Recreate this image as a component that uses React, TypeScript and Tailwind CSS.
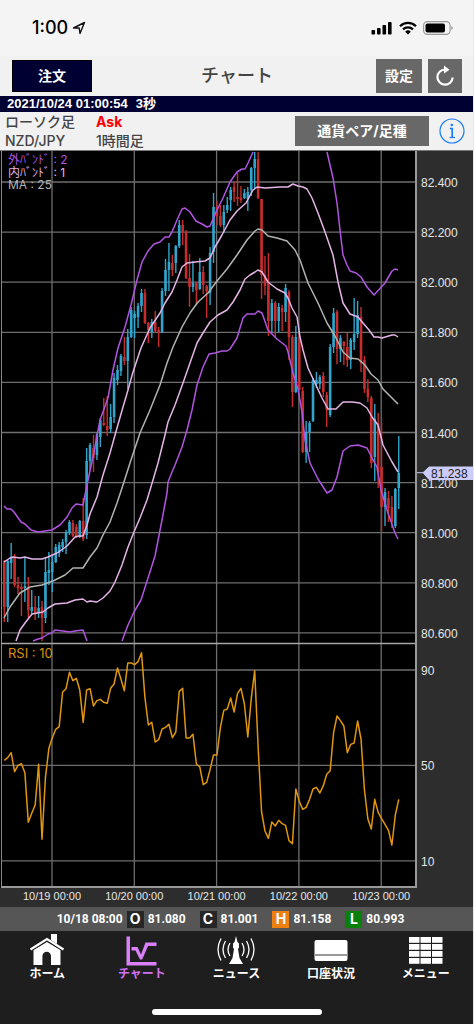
import { clsx } from "clsx"

type Point = [number, number]
// high, low, body top, body bottom (chart units), rising
type Candle = [number, number, number, number, 0 | 1]

const FIRST_X = 4.3
const STEP_X = 3.43
const xAt = (i: number) => FIRST_X + i * STEP_X

const candles: Candle[] = [
  [410, 472, 411, 457, 0], [410, 472, 411, 457, 1], [393, 429, 407, 413, 1], [404, 437, 407, 435, 0],
  [427, 444, 435, 438, 0], [434, 466, 437, 439, 0], [407, 452, 436, 438, 1], [427, 468, 437, 460, 0],
  [440, 465, 457, 461, 1], [446, 470, 457, 463, 0], [446, 468, 458, 463, 1], [451, 491, 457, 468, 0],
  [408, 473, 422, 468, 1], [402, 435, 420, 423, 1], [406, 442, 412, 422, 1], [394, 413, 397, 412, 1],
  [392, 407, 395, 403, 1], [389, 402, 392, 397, 1], [380, 404, 382, 392, 1], [370, 385, 372, 383, 1],
  [370, 387, 373, 386, 0], [374, 388, 377, 387, 0], [370, 388, 371, 387, 1], [348, 391, 371, 389, 0],
  [298, 389, 311, 385, 1], [293, 320, 295, 311, 1], [285, 322, 298, 308, 0], [283, 310, 285, 305, 1],
  [268, 297, 270, 287, 1], [248, 276, 273, 275, 0], [246, 286, 276, 280, 0], [254, 283, 267, 279, 1],
  [223, 273, 228, 267, 1], [215, 235, 220, 230, 1], [204, 226, 206, 221, 1], [187, 215, 207, 211, 0],
  [179, 239, 187, 211, 1], [157, 188, 160, 187, 1], [161, 188, 164, 168, 1], [153, 178, 156, 167, 1],
  [139, 162, 143, 156, 1], [139, 174, 143, 173, 0], [172, 193, 173, 180, 0], [169, 188, 172, 182, 1],
  [161, 182, 172, 181, 0], [177, 197, 180, 182, 0], [138, 183, 141, 182, 1], [109, 146, 120, 141, 1],
  [93, 141, 112, 120, 1], [105, 126, 113, 120, 0], [95, 123, 96, 113, 1], [70, 98, 75, 96, 1],
  [70, 95, 75, 82, 0], [80, 129, 82, 128, 0], [104, 157, 128, 137, 0], [111, 142, 133, 137, 1],
  [132, 155, 132, 140, 0], [108, 140, 122, 139, 1], [116, 144, 122, 135, 0], [135, 168, 136, 141, 0],
  [97, 155, 103, 143, 1], [43, 113, 57, 102, 1], [51, 75, 57, 66, 0], [55, 77, 66, 75, 0],
  [55, 83, 62, 75, 1], [47, 63, 55, 60, 1], [37, 61, 40, 50, 1], [32, 52, 37, 42, 0],
  [23, 56, 47, 49, 0], [36, 53, 48, 50, 0], [39, 49, 43, 48, 1], [37, 61, 42, 49, 1],
  [17, 46, 18, 40, 1], [2, 38, 9, 18, 1], [2, 49, 9, 48, 0], [49, 149, 49, 125, 0],
  [106, 145, 125, 136, 0], [103, 186, 132, 171, 0], [149, 183, 153, 171, 1], [151, 187, 153, 171, 0],
  [153, 182, 157, 171, 1], [155, 181, 158, 162, 0], [134, 172, 138, 162, 1], [140, 210, 142, 187, 0],
  [185, 257, 187, 242, 0], [176, 243, 187, 242, 1], [182, 240, 189, 240, 0], [237, 303, 241, 302, 0],
  [271, 313, 282, 302, 1], [271, 302, 273, 282, 1], [228, 272, 230, 271, 1], [222, 238, 230, 234, 1],
  [225, 239, 227, 234, 1], [222, 247, 226, 242, 0], [242, 277, 245, 260, 0], [194, 267, 197, 265, 1],
  [158, 203, 163, 197, 1], [160, 214, 162, 199, 0], [185, 212, 188, 199, 1], [191, 215, 192, 196, 0],
  [183, 217, 197, 210, 0], [188, 219, 190, 210, 1], [148, 200, 184, 192, 1], [151, 188, 165, 184, 1],
  [157, 222, 167, 213, 0], [206, 243, 210, 239, 0], [229, 252, 239, 247, 0], [246, 318, 248, 313, 0],
  [254, 331, 269, 307, 1], [263, 338, 273, 322, 0], [273, 381, 317, 357, 0], [338, 376, 342, 357, 1],
  [341, 372, 348, 358, 0], [346, 378, 357, 372, 0], [338, 378, 339, 376, 1], [286, 359, 323, 338, 1],
]

// thirds of a chart unit below the top of the RSI panel
const rsi = [
  361, 353, 338, 395, 376, 371, 398, 547, 520, 495, 373, 598, 412, 325, 293, 268, 260, 156, 146, 97,
  122, 115, 150, 247, 150, 146, 198, 182, 178, 187, 190, 145, 132, 84, 117, 152, 69, 69, 74, 65,
  38, 172, 255, 247, 306, 299, 267, 262, 253, 293, 276, 154, 145, 294, 294, 283, 372, 381, 434, 427,
  388, 345, 345, 262, 211, 207, 174, 216, 160, 145, 192, 291, 175, 92, 320, 515, 573, 595, 546, 558,
  541, 551, 556, 602, 611, 447, 484, 508, 502, 478, 447, 442, 459, 437, 403, 392, 278, 228, 242, 258,
  338, 313, 309, 243, 297, 450, 537, 567, 478, 517, 536, 553, 571, 615, 525, 478,
]

const outerBand: Point[][] = [
  [[4, 356], [7, 359], [11, 359], [14, 362], [21, 372], [25, 374], [31, 380], [38, 382], [45, 381], [52, 380], [60, 375], [67, 367], [72, 358], [76, 354], [83, 355], [87, 335], [94, 302], [100, 270], [108, 248], [113, 220], [118, 198], [125, 177], [131, 155], [137, 130], [142, 112], [148, 101], [154, 94], [160, 92], [165, 87], [169, 87], [172, 82], [177, 70], [182, 59], [185, 58], [190, 62], [196, 71], [202, 74], [207, 77], [210, 76], [217, 60], [223, 48], [230, 32], [237, 22], [242, 19], [245, 19], [248, 13], [253, 2]],
  [[327, 2], [330, 15], [333, 28], [337, 53], [340, 80], [343, 105], [347, 115], [350, 121], [356, 123], [361, 127], [367, 137], [374, 145], [385, 133], [392, 121], [395, 119], [398, 120]],
  [[33, 491], [38, 489], [42, 488], [48, 484], [52, 483], [55, 480], [63, 481], [70, 482], [75, 481], [83, 480], [87, 491]],
  [[122, 491], [128, 475], [134, 462], [141, 450], [148, 428], [155, 406], [162, 370], [167, 343], [168, 332], [172, 322], [175, 315], [182, 297], [187, 280], [192, 260], [197, 235], [203, 217], [209, 204], [215, 203], [222, 201], [227, 201], [230, 199], [237, 188], [243, 168], [247, 164], [255, 164], [258, 161], [262, 163], [268, 180], [277, 189], [286, 196], [288, 202], [293, 223], [298, 239], [302, 262], [305, 290], [310, 313], [318, 329], [327, 343], [332, 340], [337, 327], [343, 301], [350, 296], [358, 295], [367, 298], [372, 308], [377, 317], [381, 340], [388, 363], [395, 383], [398, 389]],
]

const innerBand: Point[][] = [
  [[4, 412], [10, 408], [13, 407], [20, 408], [25, 407], [32, 409], [42, 409], [48, 407], [57, 403], [67, 396], [75, 387], [79, 386], [83, 386], [87, 375], [90, 364], [97, 347], [103, 325], [110, 303], [117, 278], [123, 257], [128, 240], [133, 222], [141, 198], [150, 178], [160, 163], [165, 153], [172, 142], [177, 130], [182, 117], [187, 113], [195, 112], [205, 111], [210, 108], [215, 97], [222, 85], [230, 70], [237, 61], [246, 53], [253, 40], [257, 37], [265, 38], [280, 37], [288, 37], [293, 34], [298, 36], [303, 37], [307, 39], [312, 48], [318, 63], [325, 82], [333, 105], [338, 132], [343, 153], [350, 164], [358, 167], [363, 173], [369, 180], [374, 187], [378, 187], [382, 188], [392, 185], [395, 185], [398, 187]],
  [[16, 491], [20, 480], [25, 473], [32, 464], [43, 462], [48, 458], [55, 454], [67, 453], [75, 450], [83, 449], [87, 452], [90, 451], [97, 452], [103, 448], [110, 441], [115, 432], [122, 415], [128, 397], [134, 382], [140, 368], [147, 350], [153, 330], [158, 313], [165, 285], [168, 272], [175, 255], [183, 233], [190, 213], [197, 193], [203, 183], [210, 172], [218, 165], [227, 160], [233, 152], [240, 140], [245, 129], [250, 125], [255, 122], [258, 120], [262, 122], [268, 132], [277, 139], [285, 143], [288, 148], [292, 158], [297, 167], [300, 187], [303, 200], [308, 218], [315, 233], [322, 248], [328, 259], [336, 259], [343, 252], [352, 252], [360, 253], [367, 258], [372, 267], [378, 275], [383, 295], [392, 312], [398, 322]],
]

const movingAverage: Point[] = [
  [4, 468], [10, 457], [20, 443], [30, 437], [42, 435], [53, 431], [65, 425], [73, 418], [83, 418], [90, 407], [97, 398], [103, 385], [110, 372], [117, 353], [123, 335], [130, 313], [140, 283], [150, 260], [160, 235], [167, 213], [173, 197], [182, 177], [190, 163], [198, 152], [208, 143], [217, 131], [227, 119], [237, 105], [247, 90], [255, 81], [258, 79], [262, 80], [268, 86], [277, 88], [287, 91], [295, 100], [300, 110], [308, 133], [318, 153], [327, 173], [335, 186], [343, 202], [350, 208], [358, 209], [365, 215], [371, 224], [378, 230], [383, 239], [398, 254],
]

const priceTicks = ["82.400", "82.200", "82.000", "81.800", "81.600", "81.400", "81.200", "81.000", "80.800", "80.600"]
const dayTicks = ["10/19 00:00", "10/20 00:00", "10/21 00:00", "10/22 00:00", "10/23 00:00"]
const rsiTicks = [90, 50, 10]

const toPoints = (pts: Point[]) => pts.map((p) => p.join(",")).join(" ")

function Chart() {
  return (
    <svg viewBox="0 0 473 757" className="block h-auto w-full bg-[#2d2d2d]" role="img" aria-label="NZD/JPY 1時間足">
      <rect x="0" y="0" width="417" height="738" fill="#000" />

      {/* Grid */}
      <g stroke="#6e6e6e" strokeWidth="1.3">
        {priceTicks.map((t, i) => (
          <line key={t} x1="1" x2="416" y1={32 + i * 50.1} y2={32 + i * 50.1} />
        ))}
        {rsiTicks.map((t, i) => (
          <line key={t} x1="1" x2="416" y1={520 + i * 95.4} y2={520 + i * 95.4} />
        ))}
        {dayTicks.map((t, i) => (
          <line key={t} x1={52 + i * 82.3} x2={52 + i * 82.3} y1="1" y2="737" />
        ))}
      </g>

      {/* Candles */}
      {candles.map(([high, low, top, bottom, up], i) => (
        <g key={i} fill={up ? "#31a5cb" : "#c82d2d"}>
          <rect x={xAt(i) - 0.7} y={high} width="1.4" height={low - high} />
          <rect x={xAt(i) - 1.3} y={top} width="2.6" height={bottom - top} />
        </g>
      ))}

      {/* Bands and moving average */}
      <g fill="none" strokeWidth="1.5" strokeLinejoin="round">
        <polyline points={toPoints(movingAverage)} stroke="#b0b4b0" />
        {innerBand.map((pts, i) => (
          <polyline key={i} points={toPoints(pts)} stroke="#e4b4e6" />
        ))}
        {outerBand.map((pts, i) => (
          <polyline key={i} points={toPoints(pts)} stroke="#b055e0" />
        ))}
        <polyline points={toPoints(rsi.map((v, i): Point => [xAt(i), 490 + v / 3]))} stroke="#e0960f" />
      </g>

      {/* Frame */}
      <g stroke="#a6a6a6" fill="none">
        <line x1="0" x2="473" y1="0.5" y2="0.5" stroke="#777" />
        <line x1="1.5" x2="1.5" y1="0" y2="737" stroke="#888" />
        <line x1="1" x2="416" y1="493.4" y2="493.4" strokeWidth="1.5" />
        <path d="M1 737H416V1" strokeWidth="2" stroke="#999" />
      </g>

      {/* Indicator legend */}
      <g className="font-[Inter,'Noto_Sans_CJK_JP',sans-serif] text-[12px]">
        <text x="8" y="14" fill="#b055e0">外ﾊﾞﾝﾄﾞ : 2</text>
        <text x="8" y="27" fill="#e4b4e6">内ﾊﾞﾝﾄﾞ : 1</text>
        <text x="8" y="39" fill="#b4b4b4">MA : 25</text>
        <text x="8" y="508" fill="#d8900f" className="text-[13px]">RSI : 10</text>
      </g>

      {/* Axis labels */}
      <g className="font-['Liberation_Sans',sans-serif] text-[12px]" fill="#e6e6e6">
        {priceTicks.map((t, i) => (
          <text key={t} x="421" y={37 + i * 50.1}>{t}</text>
        ))}
        {rsiTicks.map((t, i) => (
          <text key={t} x="421" y={525 + i * 95.4}>{t}</text>
        ))}
        {dayTicks.map((t, i) => (
          <text key={t} x={52 + i * 82.3} y="750" textAnchor="middle" className="text-[11px]">{t}</text>
        ))}
        <path d="M417 322.7H423L429 317H473V329.5H429L423 322.7" fill="#ccccfb" stroke="#ccccfb" />
        <text x="431" y="328" fill="#222">81.238</text>
      </g>
    </svg>
  )
}

const quotes = [
  { mark: "O", value: "81.080", color: "bg-[#262626]" },
  { mark: "C", value: "81.001", color: "bg-[#262626]" },
  { mark: "H", value: "81.158", color: "bg-[#ee8010]" },
  { mark: "L", value: "80.993", color: "bg-[#0a800a]" },
]

const HomeIcon = () => (
  <svg width="36" height="32" viewBox="0 0 36 32" fill="#fff">
    <path d="M18 8 31.500 16V31H22V22a4.300 4.300 0 0 0-8.600 0V31H4.500V16Z" />
    <path d="M1.500 15 18 4.500 34.500 15" fill="none" stroke="#1e1e1e" strokeWidth="5" />
    <path d="M22 0H28V10L22 6Z" />
    <path d="M1.500 15.500 18 5 34.500 15.500" fill="none" stroke="#fff" strokeWidth="2.200" />
  </svg>
)

const ChartIcon = () => (
  <svg width="32" height="32" viewBox="0 0 32 32" fill="#da80fb">
    <path d="M0.500 2.500H4V28H30.500V31.500H0.500Z" />
    <path d="M5.500 13H11.500L15 20.500 19.500 8.500H30.500V12H22L16.200 25.500H14L9.500 16.500H5.500Z" />
  </svg>
)

const NewsIcon = () => (
  <svg width="40" height="32" viewBox="0 0 40 32" fill="none" stroke="#fff" strokeWidth="1.300">
    <path d="M20 2 21.500 8 23 9.500V13.500L22 15 23.500 24 27 30H13L16.500 24 18 15 17 13.500V9.500L18.500 8Z" fill="#fff" stroke="none" />
    <path d="M14 9q-4 6.500 0 13M9.500 7q-5 8.500 0 17M5 4.500q-6 11 0 22M26 9q4 6.500 0 13M30.500 7q5 8.500 0 17M35 4.500q6 11 0 22" />
  </svg>
)

const AccountIcon = () => (
  <svg width="34" height="32" viewBox="0 0 34 32">
    <rect x="0.500" y="6" width="33" height="21" rx="2" fill="#fff" />
    <rect x="0.500" y="20" width="33" height="2" fill="#999" />
  </svg>
)

const MenuIcon = () => (
  <svg width="34" height="32" viewBox="0 0 34 32" fill="#fff">
    {[0, 1, 2, 3].map((r) =>
      [0, 1, 2].map((c) => <rect key={`${r}-${c}`} x={c * 11.5} y={3 + r * 7} width="10.500" height="5.800" />),
    )}
  </svg>
)

const tabs = [
  { label: "ホーム", icon: <HomeIcon /> },
  { label: "チャート", icon: <ChartIcon />, active: true },
  { label: "ニュース", icon: <NewsIcon /> },
  { label: "口座状況", icon: <AccountIcon /> },
  { label: "メニュー", icon: <MenuIcon /> },
]

export default function App() {
  return (
    <div className="border-r border-gray-200 bg-[#f1f1f1] font-[Inter,'Noto_Sans_CJK_JP',sans-serif] text-[#444]">
      {/* Status bar */}
      <div className="flex h-14 items-center justify-between bg-[#f4f4f4] pr-5 pl-8 text-black">
        <div className="flex items-center gap-1">
          <span className="text-lg font-medium">1:00</span>
          <svg width="14" height="14" viewBox="0 0 14 14" fill="none" stroke="#111" strokeWidth="1.400" strokeLinejoin="round">
            <path d="M12.500 1.500 8 12.500 7.200 7H1.500Z" />
          </svg>
        </div>
        <div className="flex items-center gap-1.5">
          <svg width="22" height="14" viewBox="0 0 22 14">
            <rect x="0.500" y="9" width="3.600" height="4.500" rx="0.800" />
            <rect x="6" y="7" width="3.600" height="6.500" rx="0.800" />
            <rect x="11.500" y="4" width="3.600" height="9.500" rx="0.800" />
            <rect x="17" y="1" width="3.600" height="12.500" rx="0.800" />
          </svg>
          <svg width="18" height="14" viewBox="0 0 18 14" fill="none" stroke="#000" strokeWidth="2.200">
            <path d="M1 5.200a11.500 11.500 0 0 1 16 0M4 8.400a7.200 7.200 0 0 1 10 0" />
            <path d="M9 13.500 6.200 10.700a4 4 0 0 1 5.600 0Z" fill="#000" stroke="none" />
          </svg>
          <svg width="30" height="14" viewBox="0 0 30 14">
            <rect x="0.600" y="0.600" width="26.500" height="12.800" rx="3.800" fill="none" stroke="#999" strokeWidth="1.100" />
            <rect x="2.500" y="2.500" width="19.500" height="9" rx="2" />
            <path d="M28.300 5v4q1.500-.5 1.500-2t-1.500-2" fill="#999" />
          </svg>
        </div>
      </div>

      {/* Title bar */}
      <header className="grid h-10 grid-cols-3 items-center pr-[11px] pl-3">
        <button className="h-8 w-20 border border-black bg-[#000033] text-sm font-bold text-white">注文</button>
        <h1 className="text-center text-lg font-medium">チャート</h1>
        <div className="flex justify-end gap-1.5">
          <button className="h-[34px] w-[46px] bg-[#686868] text-sm font-bold text-white">設定</button>
          <button aria-label="更新" className="flex h-[34px] w-[34px] items-center justify-center bg-[#686868]">
            <svg width="20" height="22" viewBox="0 0 20 22" fill="none" stroke="#fff" strokeWidth="2.200">
              <path d="M11 4.500H10A7.600 7.600 0 1 0 17.600 12.500" />
              <path d="M9 0.500 14.500 4.700 9 8.500Z" fill="#fff" stroke="none" />
            </svg>
          </button>
        </div>
      </header>

      <div className="flex h-4 items-center gap-2 bg-[#000033] px-[7px] font-['Liberation_Sans','Noto_Sans_CJK_JP',sans-serif] text-[13px] leading-4 font-bold text-white">
        <span>2021/10/24 01:00:54</span>
        <span>3秒</span>
      </div>

      {/* Pair and timeframe */}
      <div className="flex h-[38px] items-center justify-between pr-2 pl-[5px]">
        <div className="grid grid-cols-[91px_auto] text-sm leading-[19px] font-medium">
          <span>ローソク足</span>
          <span className="font-bold text-[#ff0000]">Ask</span>
          <span>NZD/JPY</span>
          <span>1時間足</span>
        </div>
        <div className="flex items-center gap-2.5">
          <button className="h-[30px] w-[134px] bg-[#686868] text-sm font-bold text-white">通貨ペア/足種</button>
          <button aria-label="情報">
            <svg width="26" height="26" viewBox="0 0 26 26" fill="none" stroke="#1a7cf5" strokeWidth="1.200">
              <circle cx="13" cy="13" r="12" />
              <circle cx="12.800" cy="7" r="1.300" fill="#1a7cf5" stroke="none" />
              <path d="M10.800 10.500H13.200V19" strokeWidth="1.700" />
              <path d="M10.500 19.500H16" />
            </svg>
          </button>
        </div>
      </div>

      <Chart />

      {/* OHLC of the selected candle */}
      <div className="flex h-6 items-center justify-center bg-[#565656] pr-3 font-[Roboto,sans-serif] text-xs font-bold text-white">
        <span>10/18 08:00</span>
        {quotes.map((q, i) => (
          <span key={q.mark} className={clsx("flex items-center gap-1", i === 0 ? "ml-1" : "ml-3.5")}>
            <span className={clsx("flex size-[17px] items-center justify-center font-[Inter,sans-serif] text-sm", q.color)}>
              {q.mark}
            </span>
            {q.value}
          </span>
        ))}
      </div>

      {/* Tab bar */}
      <nav className="bg-[#1e1e1e] pt-[3px] pb-[9px]">
        <div className="grid grid-cols-5">
          {tabs.map((t) => (
            <a
              key={t.label}
              href="#"
              className={clsx("flex flex-col items-center text-xs font-bold", t.active ? "text-[#d070f0]" : "text-white")}
            >
              {t.icon}
              {t.label}
            </a>
          ))}
        </div>
        <div className="mx-auto mt-[27px] h-1.5 w-[170px] rounded-full bg-white" />
      </nav>
    </div>
  )
}
